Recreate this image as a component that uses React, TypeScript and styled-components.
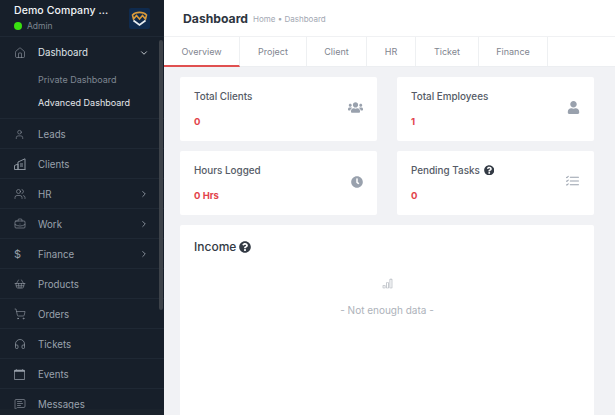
import React from "react";
import styled, { createGlobalStyle } from "styled-components";
import { ChevronDown, ChevronRight, Home, User, Users, BriefcaseBusiness, ShoppingBasket, ShoppingCart, Headphones, MessageSquareText } from "lucide-react";
import { FaUsers, FaUser, FaClock, FaQuestionCircle } from "react-icons/fa";
import { BsListCheck, BsBarChart, BsCalendar } from "react-icons/bs";

const Global = createGlobalStyle`
  html, body { margin: 0; padding: 0; height: 100%; overflow: hidden; background: #f1f2f5; }
  body { font-family: Inter, "Liberation Sans", sans-serif; }
  #root { height: 100%; }
`;

const Page = styled.div`
  display: flex;
  width: 615px;
  height: 415px;
  overflow: hidden;
`;

const Sidebar = styled.aside`
  position: relative;
  flex: 0 0 164px;
  display: flex;
  flex-direction: column;
  background: #171f2a;
  color: #aab2bd;
  height: 415px;
  overflow: hidden;
`;

const Brand = styled.div`
  flex: 0 0 37px;
  display: flex;
  align-items: flex-start;
  justify-content: space-between;
  padding: 5px 14px 0 14px;
  box-sizing: border-box;
  border-bottom: 1px solid #1f2834;
`;

const BrandText = styled.div`
  display: flex;
  flex-direction: column;
`;

const CompanyName = styled.div`
  font-size: 10.5px;
  font-weight: 500;
  line-height: 12px;
  color: #f2f4f7;
  letter-spacing: 0.1px;
`;

const RoleRow = styled.div`
  display: flex;
  align-items: center;
  gap: 5px;
  margin-top: 4px;
  font-size: 8.5px;
  line-height: 10px;
  color: #7d8590;
`;

const StatusDot = styled.span`
  width: 8px;
  height: 8px;
  border-radius: 50%;
  background: #39e010;
`;

const Logo = styled.svg`
  width: 21px;
  height: 21px;
  margin-top: 3px;
`;

const Nav = styled.nav`
  flex: 0 0 372px;
  overflow: hidden;
  display: flex;
  flex-direction: column;
`;

const Group = styled.div`
  flex: 0 0 auto;
  height: 82px;
  border-bottom: 1px solid #1f2834;
  box-sizing: border-box;
`;

const Row = styled.div<{ $active?: boolean }>`
  flex: 0 0 auto;
  height: 30px;
  box-sizing: border-box;
  display: flex;
  align-items: center;
  padding: 1px 15px 0 13px;
  font-size: 9.7px;
  color: ${(p) => (p.$active ? "#dfe3e8" : "#9aa2ad")};
  border-bottom: ${(p) => (p.$active ? "none" : "1px solid #1f2834")};
`;

const IconSlot = styled.span`
  flex: 0 0 25px;
  display: flex;
  align-items: center;
  color: #98a0aa;
  font-size: 11px;
  padding-left: 1px;
  box-sizing: border-box;
`;

const Label = styled.span`
  flex: 1;
`;

const Sub = styled.div<{ $active?: boolean }>`
  height: 22.5px;
  line-height: 22.5px;
  padding-left: 38px;
  font-size: 9px;
  color: ${(p) => (p.$active ? "#e4e7eb" : "#7f8792")};
`;

const Subs = styled.div`
  padding-top: 2px;
`;

const SidebarFoot = styled.div`
  flex: 1;
  background: #1a222c;
`;

const Thumb = styled.div`
  position: absolute;
  left: 159px;
  top: 40px;
  width: 3.5px;
  height: 270px;
  border-radius: 2px;
  background: #3d4249;
`;

const Main = styled.main`
  flex: 1;
  min-width: 0;
  display: flex;
  flex-direction: column;
`;

const Header = styled.header`
  flex: 0 0 37px;
  box-sizing: border-box;
  background: #fff;
  display: flex;
  align-items: center;
  gap: 5px;
  padding-left: 19px;
  border-bottom: 1px solid #f0f1f3;
`;

const Title = styled.h1`
  margin: 0;
  font-size: 12.2px;
  font-weight: 700;
  color: #2e3540;
`;

const Crumb = styled.span`
  font-size: 8px;
  color: #a3a8b3;
  margin-top: 1px;
`;

const Tabs = styled.div`
  flex: 0 0 30px;
  box-sizing: border-box;
  display: flex;
  background: #fff;
  border-bottom: 1px solid #eceef1;
`;

const Tab = styled.div<{ $w: number; $active?: boolean }>`
  width: ${(p) => p.$w}px;
  box-sizing: border-box;
  display: flex;
  align-items: center;
  justify-content: center;
  font-size: 9px;
  color: #7f858f;
  border-right: 1px solid #eef0f2;
  margin-bottom: ${(p) => (p.$active ? "-1px" : "0")};
  border-bottom: ${(p) => (p.$active ? "2px solid #e05050" : "none")};
`;

const Content = styled.div`
  flex: 1;
  display: grid;
  grid-template-columns: 197px 197px;
  column-gap: 20px;
  row-gap: 10px;
  grid-template-rows: 64px 64px 1fr;
  padding: 10px 22px 0 16px;
  min-height: 0;
`;

const Card = styled.div`
  background: #fff;
  border-radius: 2px;
  display: flex;
  align-items: center;
  justify-content: space-between;
  padding: 0 14px;
`;

const CardText = styled.div`
  display: flex;
  flex-direction: column;
  gap: 14px;
`;

const CardTitle = styled.div`
  display: flex;
  align-items: center;
  gap: 4px;
  font-size: 9.9px;
  line-height: 12px;
  font-weight: 500;
  color: #555b66;
`;

const CardValue = styled.div`
  font-size: 9.5px;
  line-height: 12px;
  font-weight: 700;
  color: #e2444c;
`;

const CardIcon = styled.span<{ $size: number }>`
  display: flex;
  font-size: ${(p) => p.$size}px;
  color: #99a1ad;
  margin-top: -3px;
`;

const Help = styled(FaQuestionCircle)<{ $size: number }>`
  color: #333a44;
  font-size: ${(p) => p.$size}px;
`;

const Panel = styled.section`
  grid-column: 1 / 3;
  background: #fff;
  border-radius: 2px 2px 0 0;
  padding: 15px 14px 0;
  display: flex;
  flex-direction: column;
`;

const PanelTitle = styled.h2`
  margin: 0;
  display: flex;
  align-items: center;
  gap: 3px;
  font-size: 12px;
  line-height: 14px;
  font-weight: 500;
  color: #333a44;
`;

const Empty = styled.div`
  display: flex;
  flex-direction: column;
  align-items: center;
  gap: 15px;
  margin-top: 24px;
  font-size: 10px;
  color: #adb2ba;
`;

const BuildingIcon = () => (
  <svg width="12" height="12" viewBox="0 0 12 12" fill="none" stroke="currentColor" strokeWidth="0.9">
    <path d="M0.5 11.5 V7.5 L4 6 V11.5" />
    <path d="M4 11.5 V4 L11 0.8 V11.5" />
    <path d="M0.5 11.5 H11.5 M6 6 H9 M6 8 H9" />
  </svg>
);

const items: [string, React.ReactNode, boolean][] = [
  ["Leads", <User size={11} strokeWidth={1.2} />, false],
  ["Clients", <BuildingIcon />, false],
  ["HR", <Users size={12} strokeWidth={1.2} />, true],
  ["Work", <BriefcaseBusiness size={12} strokeWidth={1.2} />, true],
  ["Finance", <span>$</span>, true],
  ["Products", <ShoppingBasket size={12} strokeWidth={1.2} />, false],
  ["Orders", <ShoppingCart size={12} strokeWidth={1.2} />, false],
  ["Tickets", <Headphones size={12} strokeWidth={1.4} />, false],
  ["Events", <BsCalendar size={11} />, false],
  ["Messages", <MessageSquareText size={12} strokeWidth={1.2} />, false],
];

const tabs: [string, number][] = [
  ["Overview", 76],
  ["Project", 67],
  ["Client", 60],
  ["HR", 49],
  ["Ticket", 63],
  ["Finance", 69],
];

export default function App() {
  return (
    <Page>
      <Global />
      <Sidebar>
        <Brand>
          <BrandText>
            <CompanyName>Demo Company ...</CompanyName>
            <RoleRow>
              <StatusDot />
              Admin
            </RoleRow>
          </BrandText>
          <Logo viewBox="0 0 21 21">
            <rect width="21" height="21" rx="2" fill="#0f2a4d" />
            <path d="M3.5 7 C7 3.5 14 3.5 17.5 7 L16.5 11 L13.5 7.5 L10.5 11 L7.5 7.5 L4.5 11 Z" fill="none" stroke="#d99a3a" strokeWidth="1.6" />
            <path d="M4.5 12.5 L10.5 17 L16.5 12.5" fill="none" stroke="#e8edf2" strokeWidth="1.7" />
          </Logo>
        </Brand>
        <Nav>
          <Group>
            <Row $active>
              <IconSlot>
                <Home size={12} strokeWidth={1.2} />
              </IconSlot>
              <Label>Dashboard</Label>
              <ChevronDown size={10} />
            </Row>
            <Subs>
              <Sub>Private Dashboard</Sub>
              <Sub $active>Advanced Dashboard</Sub>
            </Subs>
          </Group>
          {items.map(([name, icon, chevron]) => (
            <Row key={name}>
              <IconSlot>{icon}</IconSlot>
              <Label>{name}</Label>
              {chevron && <ChevronRight size={10} />}
            </Row>
          ))}
        </Nav>
        <SidebarFoot />
        <Thumb />
      </Sidebar>
      <Main>
        <Header>
          <Title>Dashboard</Title>
          <Crumb>Home • Dashboard</Crumb>
        </Header>
        <Tabs>
          {tabs.map(([t, w], i) => (
            <Tab key={t} $w={w} $active={i === 0}>
              {t}
            </Tab>
          ))}
        </Tabs>
        <Content>
          <Card>
            <CardText>
              <CardTitle>Total Clients</CardTitle>
              <CardValue>0</CardValue>
            </CardText>
            <CardIcon $size={15}><FaUsers /></CardIcon>
          </Card>
          <Card>
            <CardText>
              <CardTitle>Total Employees</CardTitle>
              <CardValue>1</CardValue>
            </CardText>
            <CardIcon $size={13}><FaUser /></CardIcon>
          </Card>
          <Card>
            <CardText>
              <CardTitle>Hours Logged</CardTitle>
              <CardValue>0 Hrs</CardValue>
            </CardText>
            <CardIcon $size={12}><FaClock /></CardIcon>
          </Card>
          <Card>
            <CardText>
              <CardTitle>Pending Tasks <Help $size={10.5} /></CardTitle>
              <CardValue>0</CardValue>
            </CardText>
            <CardIcon $size={15}><BsListCheck /></CardIcon>
          </Card>
          <Panel>
            <PanelTitle>Income <Help $size={12} /></PanelTitle>
            <Empty>
              <BsBarChart size={11} />
              <span>- Not enough data -</span>
            </Empty>
          </Panel>
        </Content>
      </Main>
    </Page>
  );
}
